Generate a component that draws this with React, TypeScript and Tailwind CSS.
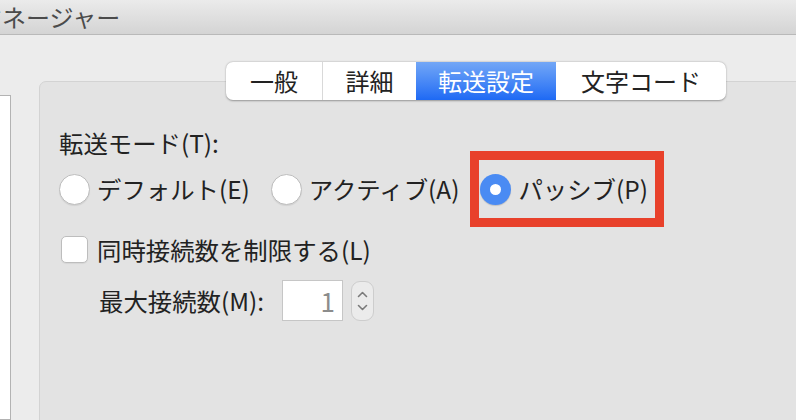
import React from "react";

const FONT = "font-['Noto_Sans_CJK_JP','Noto_Sans',sans-serif]";

function Radio({ checked, label }: { checked?: boolean; label: string }) {
  return (
    <div className="flex items-center gap-[7px]">
      {checked ? (
        <span className="flex h-[31px] w-[31px] items-center justify-center rounded-full bg-[#4a8bf3] shadow-[0_1px_1px_rgba(0,0,0,0.15)]">
          <span className="h-[11px] w-[11px] rounded-full bg-white" />
        </span>
      ) : (
        <span className="h-[31px] w-[31px] rounded-full border border-[#bdbdbd] bg-white shadow-[0_1px_1px_rgba(0,0,0,0.08)]" />
      )}
      <span className="text-[24.4px] leading-none text-[#222]">{label}</span>
    </div>
  );
}

export default function App() {
  const tabs = [
    { name: "一般", w: "w-[97px]" },
    { name: "詳細", w: "w-[93px]" },
    { name: "転送設定", w: "w-[140px]", active: true },
    { name: "文字コード", w: "w-[170px]" },
  ];

  return (
    <div className={`flex h-[420px] w-[796px] flex-col overflow-hidden bg-[#ececec] ${FONT}`}>
      {/* title bar */}
      <div className="flex h-[35px] shrink-0 items-center overflow-hidden border-b border-[#b9b9b9] bg-gradient-to-b from-[#ebebeb] to-[#d4d4d4]">
        <span className="-ml-[94px] whitespace-nowrap text-[24px] leading-none text-[#4b4b4b]">
          サイトマネージャー
        </span>
      </div>

      <div className="flex flex-1">
        {/* left list pane */}
        <div className="mt-[60px] w-[11px] shrink-0 border-y border-r border-[#b3b3b3] bg-white" />

        {/* tab panel */}
        <div className="ml-[28px] mt-[46px] -mr-[20px] -mb-[20px] flex flex-1 flex-col rounded-tl-[7px] border border-[#d3d3d3] bg-[#e3e3e3]">
          <div className="-mt-[20px] ml-[186px] flex h-[38px] w-[500px] overflow-hidden rounded-[7px] bg-white shadow-[0_0.5px_2px_rgba(0,0,0,0.35)]">
            {tabs.map((t, i) => (
              <div
                key={t.name}
                className={`${t.w} flex items-center justify-center text-[24px] leading-none ${
                  t.active
                    ? "bg-gradient-to-b from-[#72a6f6] to-[#1d69f4] text-white"
                    : "text-[#222]"
                } ${i === 0 ? "border-r border-[#d9d9d9]" : ""}`}
              >
                {t.name}
              </div>
            ))}
          </div>

          <div className="flex flex-col pl-[19px]">
            <div className="mt-[31px] text-[24.4px] leading-none text-[#222]">転送モード(T):</div>

            <div className="mt-[15px] flex h-[38px] items-center">
              <Radio label="デフォルト(E)" />
              <div className="ml-[21px]">
                <Radio label="アクティブ(A)" />
              </div>
              <div className="-my-[19px] ml-[11px] flex h-[76px] items-center border-[9px] border-[#e8412b] pl-[1px] pr-[7px]">
                <Radio checked label="パッシブ(P)" />
              </div>
            </div>

            <div className="mt-[28px] flex items-center gap-[9px]">
              <span className="ml-[2px] h-[27px] w-[27px] rounded-[5px] border border-[#bdbdbd] bg-white shadow-[0_1px_1px_rgba(0,0,0,0.06)]" />
              <span className="text-[24.4px] leading-none text-[#222]">同時接続数を制限する(L)</span>
            </div>

            <div className="mt-[17px] flex items-center">
              <span className="ml-[40px] text-[24.4px] leading-none text-[#222]">最大接続数(M):</span>
              <div className="ml-[18px] flex h-[41px] w-[61px] items-center justify-end border border-[#c6c6c6] bg-white pr-[7px] text-[26px] leading-none text-[#8c8c8c]">
                1
              </div>
              <div className="ml-[8px] flex h-[40px] w-[23px] flex-col items-center justify-center gap-[6px] rounded-[9px] border border-[#cdcdcd] bg-[#ebebeb]">
                <svg width="11" height="7" viewBox="0 0 11 7" fill="none">
                  <path d="M1.5 5.5 L5.5 1.5 L9.5 5.5" stroke="#7a7a7a" strokeWidth="1.6" strokeLinecap="round" strokeLinejoin="round" />
                </svg>
                <svg width="11" height="7" viewBox="0 0 11 7" fill="none">
                  <path d="M1.5 1.5 L5.5 5.5 L9.5 1.5" stroke="#7a7a7a" strokeWidth="1.6" strokeLinecap="round" strokeLinejoin="round" />
                </svg>
              </div>
            </div>
          </div>
        </div>
      </div>
    </div>
  );
}
